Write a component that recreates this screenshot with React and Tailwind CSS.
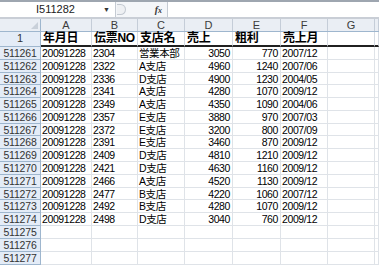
import React from "react"

const cols = ["A", "B", "C", "D", "E", "F", "G", ""]
const widths = ["w-[51px]", "w-[46px]", "w-[47px]", "w-[48px]", "w-[48px]", "w-[47px]", "w-[47px]", "flex-1"]

const heads = ["年月日", "伝票NO", "支店名", "売上", "粗利", "売上月", "", ""]

const rows = [
  ["511261", "20091228", "2304", "営業本部", "3050", "770", "2007/12"],
  ["511262", "20091228", "2322", "A支店", "4960", "1240", "2007/06"],
  ["511263", "20091228", "2336", "D支店", "4900", "1230", "2004/05"],
  ["511264", "20091228", "2341", "A支店", "4280", "1070", "2009/12"],
  ["511265", "20091228", "2349", "A支店", "4350", "1090", "2004/06"],
  ["511266", "20091228", "2357", "E支店", "3880", "970", "2007/03"],
  ["511267", "20091228", "2372", "E支店", "3200", "800", "2007/09"],
  ["511268", "20091228", "2391", "E支店", "3460", "870", "2009/12"],
  ["511269", "20091228", "2409", "D支店", "4810", "1210", "2009/12"],
  ["511270", "20091228", "2421", "D支店", "4630", "1160", "2009/12"],
  ["511271", "20091228", "2466", "A支店", "4520", "1130", "2009/12"],
  ["511272", "20091228", "2477", "B支店", "4220", "1060", "2007/12"],
  ["511273", "20091228", "2492", "B支店", "4280", "1070", "2009/12"],
  ["511274", "20091228", "2498", "D支店", "3040", "760", "2009/12"],
  ["511275"],
  ["511276"],
  ["511277"],
]

// 行の高さ（13pxと12pxを混ぜて約12.8px）
const heights = [
  "h-[13px]", "h-[13px]", "h-[12px]", "h-[13px]", "h-[13px]", "h-[13px]",
  "h-[12px]", "h-[13px]", "h-[13px]", "h-[13px]", "h-[13px]", "h-[12px]",
  "h-[13px]", "h-[13px]", "h-[13px]", "h-[13px]", "h-[13px]",
]

function FormulaBar() {
  return (
    <div className="h-[19px] border-t-2 border-b-2 border-t-[#9ea6b0] border-b-[#c9ced6] bg-white flex items-stretch">
      <div className="w-[116px] flex items-center relative border-r border-[#c5cbd3]">
        <span className="flex-1 text-[11px] text-[#222] pl-[36px]">I511282</span>
        <span className="w-[12px] text-[7px] text-[#333] leading-none">▼</span>
      </div>
      <div className="w-[52px] flex items-center bg-[#f4f6f9] border-r border-[#c5cbd3]">
        <div className="ml-[1px] w-[9px] h-[11px] rounded-r-full border border-l-0 border-[#c2c8d0] bg-[#eef0f3]" />
        <span className="ml-auto mr-[5px] text-[10px] italic font-bold text-[#3a3a3a] font-['Liberation_Serif',serif]">
          f<span className="text-[8px]">x</span>
        </span>
      </div>
      <div className="flex-1 bg-white" />
    </div>
  )
}

export default function App() {
  return (
    <div className="w-[379px] h-[267px] overflow-hidden bg-white font-['Liberation_Sans','Noto_Sans_CJK_JP',sans-serif] text-black">
      <FormulaBar />

      {/* 列見出し */}
      <div className="flex h-[13px] bg-[#eaeef4] border-b border-[#9eb6ce]">
        <div className="w-[41px] border-r border-[#9eb6ce] relative">
          <div className="absolute right-[2px] bottom-[2px] w-0 h-0 border-l-[7px] border-l-transparent border-b-[7px] border-b-[#c9d0d9]" />
        </div>
        {cols.map((c, i) => (
          <div key={i} className={`${widths[i]} shrink-0 border-r border-[#c5cdd8] text-center text-[11px] leading-[12px] text-[#3b3b3b]`}>
            {c}
          </div>
        ))}
      </div>

      {/* 1行目 */}
      <div className="flex h-[15px]">
        <div className="w-[41px] shrink-0 bg-[#e4ecf7] border-r border-b border-[#9eb6ce] text-center text-[11px] leading-[13px] text-[#333]">
          1
        </div>
        {heads.map((h, i) => (
          <div key={i} className={`${widths[i]} shrink-0 border-r border-r-[#d6dbe3] border-b-2 border-b-[#202020] pl-[2px] text-[12px] font-bold leading-[13px] tracking-[-0.3px]`}>
            {h}
          </div>
        ))}
      </div>

      {rows.map((r, ri) => (
        <div key={ri} className={`flex ${heights[ri]}`}>
          <div className="w-[41px] shrink-0 bg-[#e4ecf7] border-r border-b border-[#9eb6ce] text-center text-[10.5px] leading-[12px] text-[#333] tracking-[-0.2px]">
            {r[0]}
          </div>
          {widths.map((w, ci) => {
            const v = r[ci + 1] || ""
            const right = ci === 3 || ci === 4
            return (
              <div
                key={ci}
                className={`${w} shrink-0 border-r border-b border-[#dfe3e8] text-[10.5px] leading-[12px] tracking-[-0.4px] whitespace-nowrap overflow-hidden ${right ? "text-right pr-[2px]" : "pl-[1px]"}`}
              >
                {v}
              </div>
            )
          })}
        </div>
      ))}
    </div>
  )
}
